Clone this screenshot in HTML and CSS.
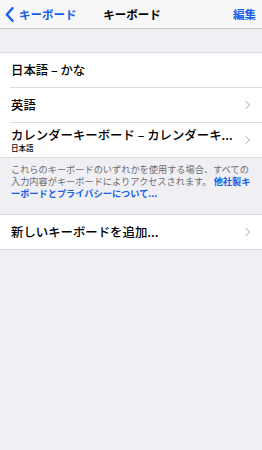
FILE: index.html
```html
<!DOCTYPE html>
<html>
<head>
  <meta charset="utf-8" />
  <meta name="viewport" content="width=device-width, user-scalable=no" />
  <title>キーボード</title>
  <link rel="stylesheet" href="styles.css">
</head>
<body>
  <div class="nav">
    <a class="back">
      <svg width="9" height="15" viewBox="0 0 9 15"><path d="M7.5 1.2 L1.8 7.5 L7.5 13.8" fill="none" stroke="#1560e8" stroke-width="2.4" stroke-linecap="round" stroke-linejoin="round"/></svg>
      <span>キーボード</span>
    </a>
    <div class="title">キーボード</div>
    <a class="edit">編集</a>
  </div>

  <div class="group first">
    <div class="row">
      <div class="label">日本語 – かな</div>
    </div>
    <div class="row">
      <div class="label">英語</div>
      <span class="chev"></span>
    </div>
    <div class="row">
      <div class="label">カレンダーキーボード – カレンダーキ...<small>日本語</small></div>
      <span class="chev"></span>
    </div>
  </div>
  <p class="note">これらのキーボードのいずれかを使用する場合、すべての入力内容がキーボードによりアクセスされます。 <a>他社製キーボードとプライバシーについて...</a></p>

  <div class="group">
    <div class="row">
      <div class="label">新しいキーボードを追加...</div>
      <span class="chev"></span>
    </div>
  </div>
</body>
</html>
```

FILE: styles.css
```css
body {
  margin: 0;
  background: #efeff4;
  font-family: "Noto Sans CJK JP", "Noto Sans", sans-serif;
  color: #000;
}
.nav {
  height: 28px;
  background: #f7f7f7;
  border-bottom: 1px solid #c8c8cc;
  display: flex;
  align-items: center;
  justify-content: space-between;
  padding: 0 6px 0 5px;
  position: relative;
  font-size: 11.5px;
}
.back {
  display: flex;
  align-items: center;
  gap: 5px;
  color: #1560e8;
  font-weight: bold;
}
.title {
  position: absolute;
  left: 0;
  right: 0;
  text-align: center;
  font-weight: bold;
  pointer-events: none;
  padding-left: 2px;
}
.edit {
  color: #1560e8;
  font-weight: bold;
  font-size: 11.5px;
}
.group {
  background: #fff;
  border-top: 1px solid #dcdce0;
  border-bottom: 1px solid #dcdce0;
}
.group.first {
  margin-top: 23px;
}
.row {
  height: 34px;
  margin-left: 10px;
  padding-right: 11px;
  display: flex;
  align-items: center;
  justify-content: space-between;
  border-bottom: 1px solid #dcdce0;
}
.row:last-child {
  border-bottom: none;
}
.label {
  font-size: 12.4px;
  font-weight: 500;
  padding-left: 1px;
  line-height: 15px;
}
.label small {
  display: block;
  font-size: 7.5px;
  line-height: 9px;
}
.chev {
  width: 5px;
  height: 5px;
  border-top: 1px solid #c4c4c8;
  border-right: 1px solid #c4c4c8;
  transform: rotate(45deg);
  margin-right: 2px;
}
.note {
  margin: 0;
  padding: 5px 10px 15px 11px;
  font-size: 9.2px;
  line-height: 12px;
  color: #6d6d72;
}
.note a {
  color: #1560e8;
  font-weight: bold;
}
```
